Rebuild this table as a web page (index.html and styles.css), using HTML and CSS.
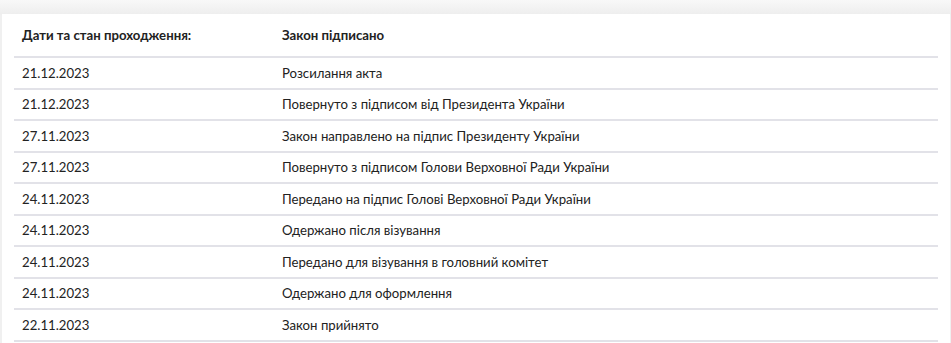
FILE: index.html
```html
<!DOCTYPE html>
<html lang="uk">
<head>
<meta charset="utf-8">
<link rel="stylesheet" href="styles.css">
</head>
<body>
<div class="page">
  <div class="card">
    <table class="stages">
      <thead>
        <tr><th class="date">Дати та стан проходження:</th><th>Закон підписано</th></tr>
      </thead>
      <tbody>
        <tr><td class="date">21.12.2023</td><td>Розсилання акта</td></tr>
        <tr><td class="date">21.12.2023</td><td>Повернуто з підписом від Президента України</td></tr>
        <tr><td class="date">27.11.2023</td><td>Закон направлено на підпис Президенту України</td></tr>
        <tr><td class="date">27.11.2023</td><td>Повернуто з підписом Голови Верховної Ради України</td></tr>
        <tr><td class="date">24.11.2023</td><td>Передано на підпис Голові Верховної Ради України</td></tr>
        <tr><td class="date">24.11.2023</td><td>Одержано після візування</td></tr>
        <tr><td class="date">24.11.2023</td><td>Передано для візування в головний комітет</td></tr>
        <tr><td class="date">24.11.2023</td><td>Одержано для оформлення</td></tr>
        <tr><td class="date">22.11.2023</td><td>Закон прийнято</td></tr>
      </tbody>
    </table>
  </div>
</div>
</body>
</html>
```
FILE: styles.css
```css
html, body {
  margin: 0;
  padding: 0;
  background: #f0f0f0;
}
.page {
  width: 951px;
  height: 343px;
  overflow: hidden;
  padding-top: 14px;
  box-sizing: border-box;
  background: linear-gradient(#f8f8f8 0, #eeeeee 14px, #f0f0f0 15px);
}
.card {
  margin-left: 2px;
  width: 948px;
  height: 400px;
  background: #fff;
  box-sizing: border-box;
  padding: 0 12px;
}
.stages {
  width: 924px;
  border-collapse: collapse;
  font-family: Lato, "Noto Sans", sans-serif;
  font-size: 13.2px;
  color: #222;
}
.stages th {
  text-align: left;
  font-weight: 700;
  padding: 14px 8px 13px;
  line-height: 15px;
  height: 15px;
  border-bottom: 2px solid #e2e2e8;
}
.stages td {
  padding: 7.75px 8px 6.75px;
  line-height: 15px;
  border-bottom: 2px solid #e2e2e8;
}
.stages .date {
  width: 244px;
}
```
